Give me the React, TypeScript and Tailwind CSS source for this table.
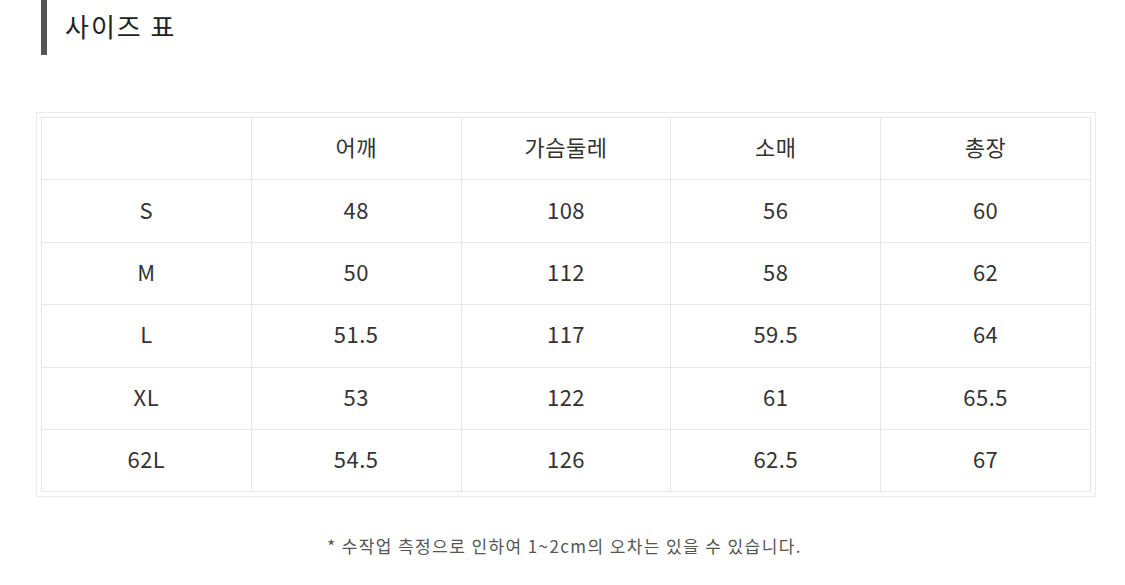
import React from "react";

const headers = ["", "어깨", "가슴둘레", "소매", "총장"];
const rows = [
  ["S", "48", "108", "56", "60"],
  ["M", "50", "112", "58", "62"],
  ["L", "51.5", "117", "59.5", "64"],
  ["XL", "53", "122", "61", "65.5"],
  ["62L", "54.5", "126", "62.5", "67"],
];

export default function App() {
  const all = [headers, ...rows];
  return (
    <div
      className="w-[1125px] h-[585px] bg-white text-[#333] relative overflow-hidden"
      style={{ fontFamily: '"Noto Sans CJK KR", "Noto Sans", sans-serif' }}
    >
      <div className="flex items-center h-[55px] pl-[41px]">
        <div className="w-[6px] h-[55px] bg-[#555]" />
        <div className="ml-[18px] text-[26px] tracking-[2px] leading-none text-[#222] -mt-[4px]">사이즈 표</div>
      </div>
      <div className="mt-[57px] ml-[36px] w-[1060px] border border-[#ececec] p-[4px]">
        <div className="border-t border-l border-[#e6e6e6]">
          {all.map((r, i) => (
            <div key={i} className="grid grid-cols-5 h-[62.4px]">
              {r.map((c, j) => (
                <div
                  key={j}
                  className="flex items-center justify-center pb-[4px] border-r border-b border-[#e6e6e6] text-[22px] tracking-[0.5px] text-[#333]"
                >
                  {c}
                </div>
              ))}
            </div>
          ))}
        </div>
      </div>
      <div className="mt-[36px] text-center text-[17px] tracking-[1.4px] text-[#555] pl-[4px]">
        * 수작업 측정으로 인하여 1~2cm의 오차는 있을 수 있습니다.
      </div>
    </div>
  );
}
